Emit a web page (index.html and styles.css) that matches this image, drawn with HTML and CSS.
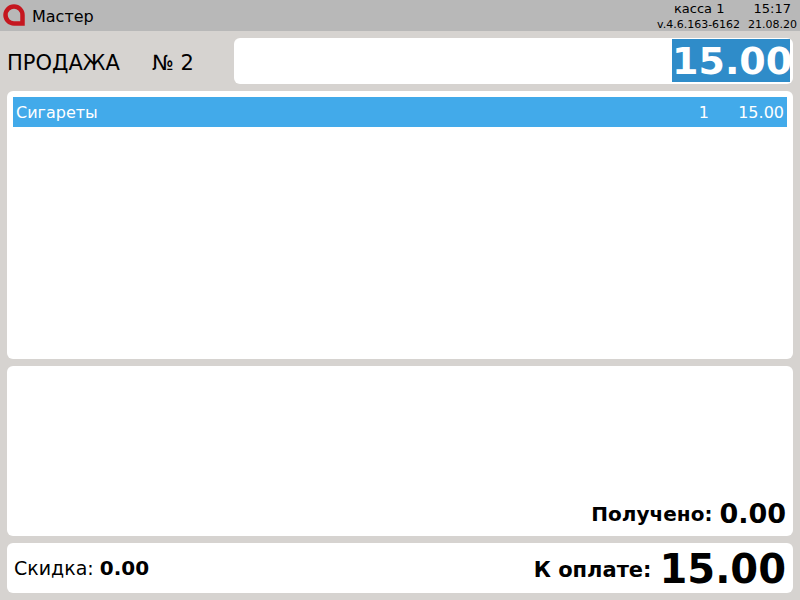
FILE: index.html
```html
<!DOCTYPE html>
<html lang="ru">
<head>
    <meta charset="UTF-8">
    <meta name="viewport" content="width=device-width, initial-scale=1.0">
    <title>Мастер</title>
    <link rel="stylesheet" href="styles.css">
</head>
<body>
    <header class="topbar">
        <svg class="logo" width="22" height="22" viewBox="0 0 22 22">
            <path d="M11 2.5a8.5 8.5 0 0 0 0 17h8.5V11A8.5 8.5 0 0 0 11 2.5z" fill="none" stroke="#c5161f" stroke-width="4.5"/>
        </svg>
        <span class="user">Мастер</span>
        <div class="info">
            <div class="info-row top"><span>касса 1</span><span class="time">15:17</span></div>
            <div class="info-row"><span>v.4.6.163-6162</span><span>21.08.20</span></div>
        </div>
    </header>

    <main class="content">
        <div class="sale-row">
            <div class="sale-title"><span class="sale-name">ПРОДАЖА</span><span>№ 2</span></div>
            <div class="sale-sum"><span class="sum-value">15.00</span></div>
        </div>

        <section class="panel items">
            <div class="item">
                <span class="item-name">Сигареты</span>
                <span class="item-qty">1</span>
                <span class="item-price">15.00</span>
            </div>
        </section>

        <section class="panel received">
            <span class="bold-label">Получено:</span>
            <span class="received-value">0.00</span>
        </section>

        <section class="panel totals">
            <div class="discount">Скидка: <b>0.00</b></div>
            <div class="to-pay">
                <span class="bold-label large">К оплате:</span>
                <span class="total-value">15.00</span>
            </div>
        </section>
    </main>
</body>
</html>
```

FILE: styles.css
```css
body {
    margin: 0;
    height: 600px;
    overflow: hidden;
    background-color: #d6d3d0;
    font-family: "DejaVu Sans", sans-serif;
    color: #000;
}
.topbar {
    display: flex;
    align-items: center;
    height: 31px;
    padding: 0 3px;
    box-sizing: border-box;
    background-color: #b8b8b8;
}
.logo {
    flex: none;
    margin-right: 7px;
    margin-bottom: 1px;
}
.user {
    font-size: 16px;
    padding-top: 1px;
}
.info {
    align-self: flex-start;
    margin-left: auto;
    padding-top: 1px;
    font-size: 11px;
    width: 140px;
}
.info-row {
    display: flex;
    justify-content: space-between;
    height: 15px;
    line-height: 15px;
}
.info-row.top {
    height: 16px;
    font-size: 13px;
    padding: 0 6px 0 17px;
}
.content {
    display: flex;
    flex-direction: column;
    gap: 7px;
    padding: 7px;
}
.sale-row {
    display: flex;
    height: 46px;
}
.sale-title {
    width: 227px;
    display: flex;
    align-items: center;
    font-size: 21px;
    padding-top: 4px;
    box-sizing: border-box;
}
.sale-name {
    width: 145px;
}
.sale-sum {
    flex: 1;
    display: flex;
    justify-content: flex-end;
    padding: 1px 3px 2px 0;
    background-color: #fff;
    border-radius: 6px;
}
.sum-value {
    background-color: #2f8cc9;
    color: #fff;
    font-size: 38px;
    font-weight: bold;
    line-height: 44px;
    height: 43px;
    width: 118px;
    padding-right: 1px;
    box-sizing: border-box;
    text-align: right;
}
.panel {
    background-color: #fff;
    border-radius: 6px;
    box-sizing: border-box;
}
.items {
    height: 268px;
    padding: 6px;
}
.item {
    display: flex;
    align-items: center;
    height: 30px;
    padding: 1px 3px 0;
    box-sizing: border-box;
    background-color: #42aaea;
    color: #fff;
    font-size: 16px;
}
.item-name {
    flex: 1;
}
.item-price {
    width: 75px;
    text-align: right;
}
.received {
    height: 170px;
    display: flex;
    justify-content: flex-end;
    align-items: flex-end;
    gap: 7px;
    padding: 0 7px 7px;
}
.bold-label {
    font-size: 20px;
    font-weight: bold;
    padding-bottom: 3px;
}
.bold-label.large {
    font-size: 21px;
    padding: 4px 0 0;
}
.received-value {
    font-size: 27px;
    font-weight: bold;
}
.totals {
    height: 50px;
    display: flex;
    justify-content: space-between;
    align-items: center;
    padding: 0 7px;
}
.discount {
    font-size: 19px;
}
.discount b {
    font-size: 20px;
}
.to-pay {
    display: flex;
    align-items: center;
    gap: 8px;
}
.total-value {
    font-size: 40px;
    font-weight: bold;
    padding-top: 2px;
}
```
